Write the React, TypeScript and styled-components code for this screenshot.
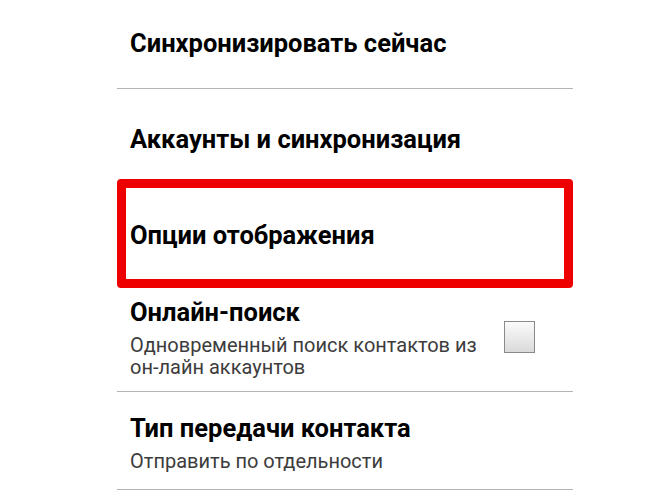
import styled, { createGlobalStyle } from "styled-components";

const GlobalStyle = createGlobalStyle`
  html, body {
    margin: 0;
    padding: 0;
    background: #ffffff;
  }
  body {
    font-family: Roboto, "Noto Sans", sans-serif;
  }
`;

type SettingItem = {
  title: string;
  summary?: string;
  height: number;
  padTop: number;
  divider: boolean;
  checkbox?: boolean;
  highlighted?: boolean;
};

const items: SettingItem[] = [
  { title: "Синхронизировать сейчас", height: 89, padTop: 28, divider: true },
  { title: "Аккаунты и синхронизация", height: 90, padTop: 35, divider: false },
  {
    title: "Опции отображения",
    height: 109,
    padTop: 32,
    divider: false,
    highlighted: true,
  },
  {
    title: "Онлайн-поиск",
    summary: "Одновременный поиск контактов из он-лайн аккаунтов",
    height: 104,
    padTop: 9,
    divider: true,
    checkbox: true,
  },
  {
    title: "Тип передачи контакта",
    summary: "Отправить по отдельности",
    height: 98,
    padTop: 21,
    divider: true,
  },
];

const App = () => {
  return (
    <>
      <GlobalStyle />
      <Screen>
        <List>
          {items.map((item) => (
            <Row
              key={item.title}
              $height={item.height}
              $padTop={item.padTop}
              $divider={item.divider}
              $highlighted={!!item.highlighted}
            >
              <TextBlock>
                <Title>{item.title}</Title>
                {item.summary && <Summary>{item.summary}</Summary>}
              </TextBlock>
              {item.checkbox && <CheckBox />}
            </Row>
          ))}
        </List>
      </Screen>
    </>
  );
};

const Screen = styled.div`
  width: 650px;
  height: 504px;
  overflow: hidden;
  background: #ffffff;
`;

const List = styled.div`
  margin-left: 117px;
  width: 456px;
  display: flex;
  flex-direction: column;
`;

const Row = styled.div<{
  $height: number;
  $padTop: number;
  $divider: boolean;
  $highlighted: boolean;
}>`
  box-sizing: border-box;
  height: ${({ $height }) => $height}px;
  display: flex;
  align-items: flex-start;
  justify-content: space-between;
  padding: ${({ $padTop }) => $padTop}px 38px 0 13px;
  border-bottom: ${({ $divider }) => ($divider ? "1px solid #b4b4b4" : "none")};

  ${({ $highlighted }) =>
    $highlighted &&
    `
    border: 9px solid #ee0000;
    border-radius: 4px;
    padding-left: 4px;
    padding-right: 29px;
  `}
`;

const TextBlock = styled.div`
  display: flex;
  flex-direction: column;
  gap: 7px;
`;

const Title = styled.div`
  font-size: 25.5px;
  font-weight: 700;
  color: #000000;
  line-height: 30px;
`;

const Summary = styled.div`
  font-size: 20px;
  color: #3c3c3c;
  line-height: 22px;
  max-width: 352px;
`;

const CheckBox = styled.div`
  box-sizing: border-box;
  width: 31px;
  height: 32px;
  margin-top: 24px;
  border: 1px solid #8a8a8a;
  background: linear-gradient(#fbfbfb, #dadada);
  flex-shrink: 0;
`;

export default App;
